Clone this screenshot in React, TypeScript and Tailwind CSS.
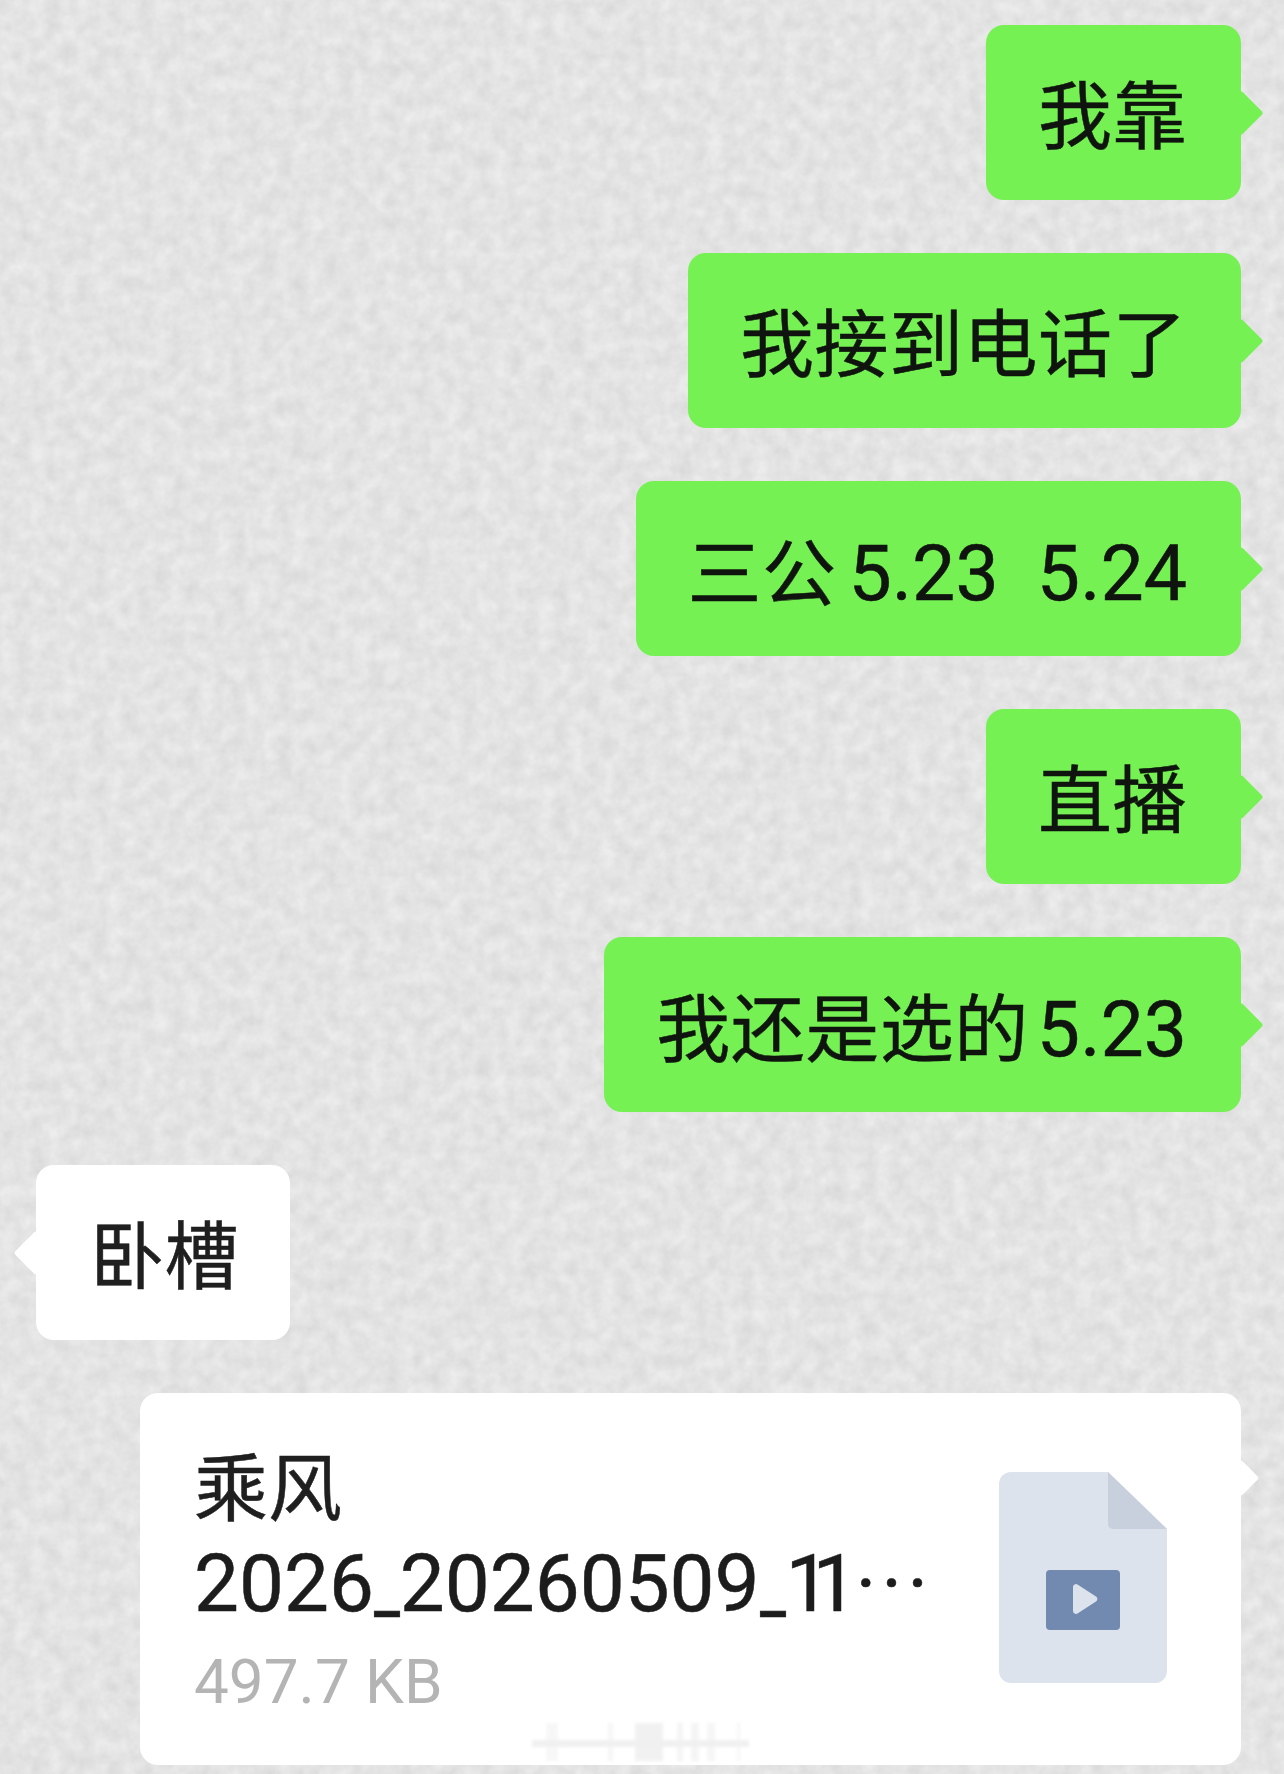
import type { ReactNode } from "react";

const fontStack = "font-['Roboto','Noto_Sans_CJK_SC',sans-serif]";

function Tail({ side, color }: { side: "left" | "right"; color: string }) {
  const pos = side === "right" ? "right-[-16px]" : "left-[-16px]";
  return <div className={`absolute top-[72px] h-[32px] w-[32px] rotate-45 rounded-[3px] ${pos} ${color}`} />;
}

function Bubble({ children, side = "right" }: { children: ReactNode; side?: "left" | "right" }) {
  const isRight = side === "right";
  return (
    <div
      className={
        isRight
          ? "relative mr-[43px] flex h-[175px] items-center self-end rounded-[18px] bg-[#76f153] pr-[54px] pl-[52px] text-[74px] text-[#0f150e]"
          : "relative ml-[36px] flex h-[175px] items-center self-start rounded-[18px] bg-white pr-[51px] pl-[54px] text-[74px] text-[#1f1f1f]"
      }
    >
      <Tail side={side} color={isRight ? "bg-[#76f153]" : "bg-white"} />
      <span className="relative whitespace-pre pt-[11px] leading-none tracking-[0.5px] [-webkit-text-stroke:0.5px]">{children}</span>
    </div>
  );
}

function Underscore() {
  return <span className="inline-block w-[26px] origin-left scale-x-[0.72]">_</span>;
}

function FileIcon() {
  return (
    <svg width="168" height="211" viewBox="0 0 168 211" className="shrink-0">
      <path d="M12 0H109L168 57V199a12 12 0 0 1-12 12H12A12 12 0 0 1 0 199V12A12 12 0 0 1 12 0Z" fill="#dce3ed" />
      <path d="M109 0L168 57H114a5 5 0 0 1-5-5Z" fill="#c7d0dc" />
      <rect x="47" y="98" width="74" height="60" rx="4" fill="#7289b0" />
      <path d="M74 115a3 3 0 0 1 4.500-2.600L97 124.500a3 3 0 0 1 0 5L78.500 141.500A3 3 0 0 1 74 139Z" fill="#dce3ed" />
    </svg>
  );
}

export default function App() {
  return (
    <div className={`relative flex h-[1774px] w-full flex-col gap-[53px] overflow-hidden bg-[#ecedec] pt-[25px] ${fontStack}`}>
      {/* paper grain behind the chat */}
      <svg className="absolute inset-0 h-full w-full" aria-hidden="true">
        <filter id="grain" x="0" y="0" width="100%" height="100%" colorInterpolationFilters="sRGB">
          <feTurbulence type="fractalNoise" baseFrequency="0.065" numOctaves="3" seed="4" />
          <feColorMatrix values="0 0 0 0 0.8  0 0 0 0 0.805  0 0 0 0 0.8  0.8 0 0 0 -0.1" />
        </filter>
        <rect width="100%" height="100%" filter="url(#grain)" />
      </svg>

      <Bubble>我靠</Bubble>
      <Bubble>我接到电话了</Bubble>
      <Bubble>
        三公<span className="ml-[12px] text-[77px] tracking-normal">{"5.23  5.24"}</span>
      </Bubble>
      <Bubble>直播</Bubble>
      <Bubble>
        我还是选的<span className="ml-[8px] text-[77px] tracking-normal">5.23</span>
      </Bubble>
      <Bubble side="left">卧槽</Bubble>

      <div className="relative mr-[43px] ml-[140px] flex h-[372px] justify-between rounded-[18px] bg-white pt-[49px] pr-[74px] pl-[54px]">
        <div className="absolute top-[72px] right-[-13px] h-[26px] w-[26px] rotate-45 rounded-[3px] bg-white" />
        <div className="relative [-webkit-text-stroke:0.5px]">
          <p className="h-[94px] text-[74px] leading-[96px] text-[#1f1f1f]">乘风</p>
          <p className="h-[98px] whitespace-nowrap text-[80px] leading-[96px] text-[#1c1c1c]">
            2026<Underscore />20260509<Underscore />
            <span className="tracking-[-18px]">11</span>
            <span className="ml-[16px] tracking-[5px]">···</span>
          </p>
          <p className="h-[96px] text-[62px] leading-[96px] text-[#b4b4b4] [-webkit-text-stroke:0px]">497.7 KB</p>
        </div>
        <div className="relative pt-[30px]">
          <FileIcon />
        </div>
        {/* smudged watermark at the bottom edge */}
        <div className="absolute bottom-[4px] left-[392px] flex h-[38px] w-[217px] items-stretch opacity-50 blur-[1.5px]">
          <div className="absolute top-[17px] left-0 h-[7px] w-full bg-[#e2e2e2]" />
          <div className="ml-[14px] w-[12px] bg-[#f0f0f0]" />
          <div className="ml-[50px] w-[5px] bg-[#eeeeee]" />
          <div className="ml-[22px] w-[28px] bg-[#e4e4e4]" />
          <div className="ml-[14px] w-[6px] bg-[#ebebeb]" />
          <div className="ml-[8px] w-[8px] bg-[#ebebeb]" />
          <div className="ml-[8px] w-[8px] bg-[#eeeeee]" />
          <div className="ml-[22px] w-[3px] bg-[#eeeeee]" />
        </div>
      </div>
    </div>
  );
}
